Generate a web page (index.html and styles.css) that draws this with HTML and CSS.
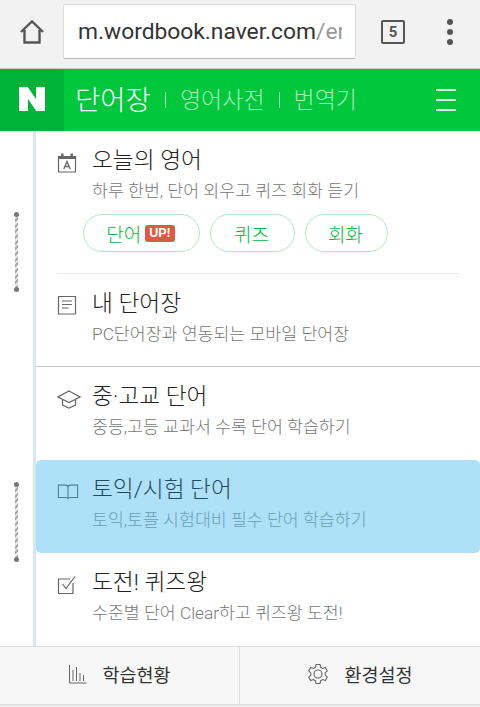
FILE: index.html
```html
<!DOCTYPE html>
<html lang="ko">
<head>
    <meta charset="UTF-8">
    <meta name="viewport" content="width=device-width, initial-scale=1.0">
    <title>단어장</title>
    <link rel="stylesheet" href="styles.css">
</head>
<body>

    <div class="browser-bar">
        <svg class="home-icon" width="26" height="26" viewBox="0 0 26 26">
            <path d="M2 13 13 2.500 24 13M5.500 11V23.500H20.500V11" fill="none" stroke="#555" stroke-width="2.400"/>
        </svg>
        <div class="url-box">
            <div class="url-text"><span class="url-host">m.wordbook.naver.com</span><span class="url-path">/en</span></div>
        </div>
        <div class="tab-count">5</div>
        <div class="menu-dots"><i></i><i></i><i></i></div>
    </div>

    <header class="app-header">
        <div class="logo-box">
            <svg width="26" height="24" viewBox="0 0 26 24"><path d="M0 0H8.800L17 12V0H26V24H17.200L9 12V24H0Z" fill="#fff"/></svg>
        </div>
        <nav class="top-nav">
            <a class="nav-current">단어장</a>
            <span class="nav-sep"></span>
            <a>영어사전</a>
            <span class="nav-sep"></span>
            <a>번역기</a>
        </nav>
        <div class="hamburger"><i></i><i></i><i></i></div>
    </header>

    <div class="note">
        <div class="rail">
            <div class="ring"></div>
            <div class="ring ring-second"></div>
        </div>
        <div class="menu">
            <div class="group">
                <div class="item item-today">
                    <svg class="item-icon" width="20" height="20" viewBox="0 0 20 20">
                        <path d="M1.500 3.500H18.500V19H1.500Z" fill="none" stroke="#666" stroke-width="1.200"/>
                        <path d="M1.500 3.500H18.500V6H1.500ZM4 .5H6.500V4H4ZM13.500 .5H16V4H13.500Z" fill="#666"/>
                        <path d="M6.800 16 10 8.500 13.200 16M7.900 13.500H12.100" fill="none" stroke="#666" stroke-width="1.300"/>
                    </svg>
                    <h2>오늘의 영어</h2>
                    <p>하루 한번, 단어 외우고 퀴즈 회화 듣기</p>
                    <div class="pills">
                        <a class="pill pill-word">단어<span class="badge-up">UP!</span></a>
                        <a class="pill pill-quiz">퀴즈</a>
                        <a class="pill pill-talk">회화</a>
                    </div>
                </div>
                <div class="item item-mine">
                    <svg class="item-icon" width="20" height="20" viewBox="0 0 20 20">
                        <path d="M1.500 1.500H18.500V19H1.500Z" fill="none" stroke="#666" stroke-width="1.200"/>
                        <path d="M5 6H15M5 9.500H15M5 13H11.500" fill="none" stroke="#666" stroke-width="1.200"/>
                    </svg>
                    <h2>내 단어장</h2>
                    <p>PC단어장과 연동되는 모바일 단어장</p>
                </div>
            </div>
            <div class="item item-school">
                <svg class="item-icon" width="24" height="20" viewBox="0 0 24 20">
                    <path d="M12 2 23 8 12 13.500 1 8Z" fill="none" stroke="#666" stroke-width="1.200"/>
                    <path d="M5.500 11V16L12 19 18.500 16V11" fill="none" stroke="#666" stroke-width="1.200"/>
                </svg>
                <h2>중·고교 단어</h2>
                <p>중등,고등 교과서 수록 단어 학습하기</p>
            </div>
            <div class="item item-selected">
                <svg class="item-icon" width="22" height="20" viewBox="0 0 24 20">
                    <path d="M1.500 2.500H9.500Q12 2.500 12 5V17.500Q12 16 9.500 16H1.500ZM22.500 2.500H14.500Q12 2.500 12 5V17.500Q12 16 14.500 16H22.500Z" fill="none" stroke="#4d8199" stroke-width="1.200"/>
                </svg>
                <h2>토익/시험 단어</h2>
                <p>토익,토플 시험대비 필수 단어 학습하기</p>
            </div>
            <div class="item item-quiz">
                <svg class="item-icon" width="20" height="20" viewBox="0 0 20 20">
                    <path d="M16 8V18.500H1.500V4H13" fill="none" stroke="#666" stroke-width="1.200"/>
                    <path d="M5.500 9 9 13.500 18 1.500" fill="none" stroke="#666" stroke-width="1.200"/>
                </svg>
                <h2>도전! 퀴즈왕</h2>
                <p>수준별 단어 Clear하고 퀴즈왕 도전!</p>
            </div>
        </div>
    </div>

    <footer class="bottom-bar">
        <a class="bottom-link">
            <svg width="18" height="20" viewBox="0 0 18 20">
                <path d="M.5 1V19H17.500M4 6V17M7.500 3V17M11 9V17M14.500 11V17" fill="none" stroke="#666" stroke-width="1"/>
            </svg>
            <span>학습현황</span>
        </a>
        <a class="bottom-link">
            <svg width="22" height="22" viewBox="0 0 22 22">
                <path d="M9 1.500H13L13.600 4.300 15.600 5.400 18.300 4.500 20.300 8 18.200 9.900V12.100L20.300 14 18.300 17.500 15.600 16.600 13.600 17.700 13 20.500H9L8.400 17.700 6.400 16.600 3.700 17.500 1.700 14 3.800 12.100V9.900L1.700 8 3.700 4.500 6.400 5.400 8.400 4.300Z" fill="none" stroke="#666" stroke-width="1.100"/>
                <circle cx="11" cy="11" r="4" fill="none" stroke="#666" stroke-width="1.100"/>
            </svg>
            <span>환경설정</span>
        </a>
    </footer>

</body>
</html>
```

FILE: styles.css
```css
html, body {
    margin: 0;
    padding: 0;
    height: 707px;
    overflow: hidden;
}

body {
    font-family: Roboto, 'Noto Sans CJK KR', sans-serif;
    font-weight: 300;
    background-color: #ececec;
}

h2, p {
    margin: 0;
    font-weight: 300;
}

/* browser chrome */
.browser-bar {
    display: flex;
    align-items: center;
    height: 68px;
    background-color: #f2f2f2;
    border-bottom: 1px solid #ccc;
}

.home-icon {
    margin: 0 18px 5px 19px;
}

.url-box {
    width: 264px;
    height: 53px;
    margin-bottom: 5px;
    padding: 0 13px 0 14px;
    background-color: #fff;
    border: 1px solid #ddd;
    border-bottom-color: #bbb;
    border-radius: 2px;
    font-size: 22.800px;
    font-weight: 400;
    line-height: 53px;
    white-space: nowrap;
}

.url-text {
    overflow: hidden;
}

.url-host {
    color: #333;
}

.url-path {
    color: #999;
}

.tab-count {
    width: 20px;
    height: 20px;
    margin: 0 0 5px 25px;
    border: 2px solid #555;
    border-radius: 2px;
    color: #555;
    font-size: 15px;
    font-weight: 700;
    line-height: 20px;
    text-align: center;
}

.menu-dots {
    display: flex;
    flex-direction: column;
    gap: 4px;
    margin: 0 0 5px 42px;
}

.menu-dots i {
    width: 6px;
    height: 6px;
    border-radius: 50%;
    background-color: #555;
}

/* green header */
.app-header {
    display: flex;
    align-items: center;
    height: 62px;
    background-color: #00c73c;
}

.logo-box {
    display: flex;
    align-items: center;
    justify-content: center;
    width: 64px;
    height: 100%;
    padding-bottom: 2px;
    box-sizing: border-box;
    background-color: #00b236;
}

.top-nav {
    display: flex;
    align-items: center;
    flex: 1;
    padding: 0 0 4px 11px;
    color: #a6ecbb;
    font-size: 23px;
}

.nav-current {
    color: #fff;
    font-size: 27.500px;
}

.nav-sep {
    width: 1px;
    height: 16px;
    margin: 4px 14px 0;
    background-color: #a6ecbb;
}

.hamburger {
    display: flex;
    flex-direction: column;
    gap: 8px;
    width: 20px;
    margin-right: 24px;
}

.hamburger i {
    height: 2px;
    background-color: #d9f7e2;
}

/* notebook */
.note {
    display: flex;
    height: 515px;
    background-color: #fff;
}

.rail {
    flex: none;
    width: 36px;
    padding-top: 83px;
    box-sizing: border-box;
    border-right: 3px solid #d8e6f8;
}

.ring {
    position: relative;
    width: 3px;
    height: 76px;
    margin-left: 15px;
    background: repeating-linear-gradient(135deg, #aaa 0 2px, #e6e6e6 2px 4px);
}

.ring::before,
.ring::after {
    content: "";
    position: absolute;
    left: -1px;
    width: 5px;
    height: 5px;
    border-radius: 50%;
    background-color: #777;
}

.ring::before {
    top: -2px;
}

.ring::after {
    bottom: -2px;
}

.ring-second {
    margin-top: 194px;
}

.menu {
    flex: 1;
    min-width: 0;
}

.group {
    border-bottom: 1px solid #ccc;
}

.item {
    position: relative;
    height: 93px;
    padding: 15px 20px 0 56px;
    box-sizing: border-box;
}

.item h2 {
    color: #222;
    font-size: 22.700px;
    line-height: 30px;
}

.item p {
    margin-top: 1px;
    color: #777;
    font-size: 17.300px;
    line-height: 28px;
}

.item-icon {
    position: absolute;
    left: 21px;
    top: 22px;
}

.item-today {
    height: 142px;
}

.item-mine {
    margin: 0 20px 0 21px;
    padding-left: 35px;
    border-top: 1px solid #eaeaea;
}

.item-mine .item-icon {
    left: 0;
    top: 21px;
}

.item-selected {
    background-color: #aee0f7;
    border-radius: 5px;
}

.item-selected h2 {
    color: #1f4b60;
}

.item-selected p {
    color: #6a9fb6;
}

.pills {
    display: flex;
    gap: 10px;
    margin: 9px 0 0 -9px;
}

.pill {
    display: flex;
    align-items: center;
    justify-content: center;
    height: 38px;
    padding-right: 2px;
    box-sizing: border-box;
    border: 1.500px solid #b4e8c3;
    border-radius: 19px;
    color: #00b93a;
    font-size: 19px;
}

.pill-word {
    width: 117px;
}

.pill-quiz {
    width: 85px;
}

.pill-talk {
    width: 83px;
}

.badge-up {
    margin-left: 4px;
    padding: 2px 4px;
    border-radius: 3px;
    background-color: #de5a47;
    color: #fff;
    font-family: 'Liberation Sans', sans-serif;
    font-size: 12.500px;
    font-weight: 700;
    line-height: 13px;
}

/* bottom bar */
.bottom-bar {
    display: flex;
    height: 59px;
    box-sizing: border-box;
    background-color: #f7f7f7;
    border-top: 1px solid #ddd;
    border-bottom: 1px solid #ddd;
}

.bottom-link {
    display: flex;
    flex: 1;
    align-items: center;
    justify-content: center;
    gap: 15px;
    padding-bottom: 4px;
    color: #333;
    font-size: 18.500px;
    font-weight: 400;
}

.bottom-link + .bottom-link {
    border-left: 1px solid #ddd;
    margin-left: -1px;
}
```
